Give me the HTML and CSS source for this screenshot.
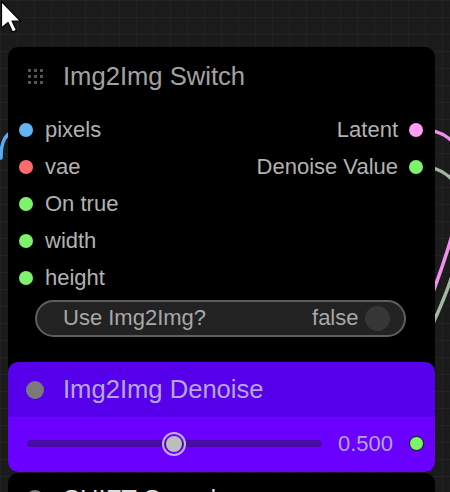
FILE: index.html
```html
<!DOCTYPE html>
<html lang="en">
  <head>
    <meta charset="UTF-8" />
    <title>Img2Img Switch</title>
    <link rel="stylesheet" href="styles.css">
  </head>
  <body>
    <div class="canvas">
      <!-- links sit under the nodes -->
      <svg class="links" width="450" height="492" viewBox="0 0 450 492">
        <path d="M1 158 C1 146 2 129 26 129" stroke="#5aacf2" />
        <path d="M416 129 C480 129 472 190 430 300" stroke="#f290ee" />
        <path d="M416 166 C480 166 475 240 425 340" stroke="#a3b8a3" />
      </svg>

      <div class="node node-switch">
        <div class="node-title">
          <svg class="grip" width="15" height="15" viewBox="0 0 15 15">
            <rect x="0" y="0" width="3" height="3" /><rect x="6" y="0" width="3" height="3" /><rect x="12" y="0" width="3" height="3" />
            <rect x="0" y="6" width="3" height="3" /><rect x="6" y="6" width="3" height="3" /><rect x="12" y="6" width="3" height="3" />
            <rect x="0" y="12" width="3" height="3" /><rect x="6" y="12" width="3" height="3" /><rect x="12" y="12" width="3" height="3" />
          </svg>
          <span class="title-text">Img2Img Switch</span>
        </div>
        <div class="slots">
          <div class="inputs">
            <div class="slot"><span class="dot dot-blue"></span>pixels</div>
            <div class="slot"><span class="dot dot-red"></span>vae</div>
            <div class="slot"><span class="dot dot-green"></span>On true</div>
            <div class="slot"><span class="dot dot-green"></span>width</div>
            <div class="slot"><span class="dot dot-green"></span>height</div>
          </div>
          <div class="outputs">
            <div class="slot">Latent<span class="dot dot-pink"></span></div>
            <div class="slot">Denoise Value<span class="dot dot-green"></span></div>
          </div>
        </div>
        <div class="toggle">
          <span class="toggle-label">Use Img2Img?</span>
          <span class="toggle-value">false</span>
          <span class="knob"></span>
        </div>
      </div>

      <div class="node node-denoise">
        <div class="denoise-head">
          <span class="head-dot"></span>
          <span class="title-text">Img2Img Denoise</span>
        </div>
        <div class="denoise-body">
          <div class="track"><span class="thumb"></span></div>
          <span class="slider-value">0.500</span>
          <span class="dot dot-green dot-ring"></span>
        </div>
      </div>

      <div class="node node-next">
        <div class="next-head">
          <span class="head-dot"></span>
          <span class="next-title">SHIFT Sampler</span>
        </div>
      </div>

      <svg class="cursor" width="24" height="36" viewBox="0 0 24 36">
        <polygon points="1.5,1.5 1.5,28 8,22.5 12.5,32 16.5,30.3 12,21 20.5,21" />
      </svg>
    </div>
  </body>
</html>
```

FILE: styles.css
```css
body {
  margin: 0;
  font-family: "Liberation Sans", Arial, sans-serif;
}
.canvas {
  position: relative;
  width: 450px;
  height: 492px;
  overflow: hidden;
  background-color: #1b1b1b;
  background-image:
    linear-gradient(to right, #222 1px, transparent 1px),
    linear-gradient(to bottom, #222 1px, transparent 1px);
  background-size: 17px 17px;
}
.links {
  position: absolute;
  left: 0;
  top: 0;
}
.links path {
  fill: none;
  stroke-width: 3.5;
  stroke-linecap: round;
}
.node {
  position: absolute;
  left: 8px;
  width: 427px;
  background: #000;
  border-radius: 10px;
  box-sizing: border-box;
}
.dot {
  display: inline-block;
  width: 14px;
  height: 14px;
  border-radius: 50%;
  flex-shrink: 0;
}
.dot-blue { background: #64b5f6; }
.dot-red { background: #ff6b6b; }
.dot-green { background: #7cf36a; }
.dot-pink { background: #ff9cf6; }

/* switch node */
.node-switch {
  top: 47px;
  height: 330px;
}
.node-title {
  height: 58px;
  display: flex;
  align-items: center;
  padding-left: 20px;
}
.grip rect {
  fill: #555;
}
.title-text {
  margin-left: 20px;
  font-size: 25.6px;
  color: #a2a2a2;
}
.slots {
  display: flex;
  justify-content: space-between;
  padding: 6px 12px 0 11px;
}
.inputs,
.outputs {
  display: flex;
  flex-direction: column;
}
.outputs {
  align-items: flex-end;
}
.slot {
  height: 37px;
  display: flex;
  align-items: center;
  gap: 12px;
  font-size: 22px;
  color: #b2b2b2;
}
.outputs .slot {
  gap: 11px;
}
.toggle {
  margin: 3.5px 0 0 27px;
  width: 371px;
  height: 37px;
  box-sizing: border-box;
  border: 2px solid #5e5e5e;
  border-radius: 19px;
  background: #222;
  display: flex;
  align-items: center;
  padding: 0 14.5px 0 26px;
  font-size: 22px;
  color: #a8a8a8;
}
.toggle-label {
  flex: 1;
}
.knob {
  width: 25px;
  height: 25px;
  border-radius: 50%;
  background: #363636;
  margin-left: 6px;
}

/* denoise node */
.node-denoise {
  top: 362px;
  height: 110px;
  overflow: hidden;
}
.denoise-head {
  height: 55px;
  background: #5700ec;
  display: flex;
  align-items: center;
  padding-left: 18px;
}
.head-dot {
  width: 18px;
  height: 18px;
  border-radius: 50%;
  background: #7a7a7a;
}
.denoise-head .title-text {
  margin-left: 19px;
  color: #b4a8d8;
}
.denoise-body {
  height: 55px;
  background: #6a00ff;
  display: flex;
  align-items: center;
  padding: 0 11.5px 2px 19px;
  box-sizing: border-box;
}
.track {
  position: relative;
  width: 295px;
  height: 7px;
  border-radius: 4px;
  background: #4a0ca8;
}
.thumb {
  position: absolute;
  left: 135px;
  top: 50%;
  transform: translateY(-50%);
  width: 24px;
  height: 24px;
  box-sizing: border-box;
  border: 2px solid #c2aef2;
  padding: 2px;
  border-radius: 50%;
  background: #bdbdbd;
  background-clip: content-box;
}
.slider-value {
  margin-left: auto;
  font-size: 22px;
  color: #b0a4d6;
}
.dot-ring {
  width: 15px;
  height: 15px;
  box-sizing: border-box;
  border: 1.5px solid #111;
  margin-left: 15.5px;
}

/* next node, mostly off-screen */
.node-next {
  top: 473px;
  height: 100px;
}
.next-head {
  height: 52px;
  display: flex;
  align-items: center;
  padding-left: 18px;
}
.next-title {
  margin-left: 19px;
  font-size: 25.6px;
  color: #ddd;
}

.cursor {
  position: absolute;
  left: 0;
  top: 0;
}
.cursor polygon {
  fill: #fff;
  stroke: #000;
  stroke-width: 1.2;
  stroke-linejoin: round;
}
```
